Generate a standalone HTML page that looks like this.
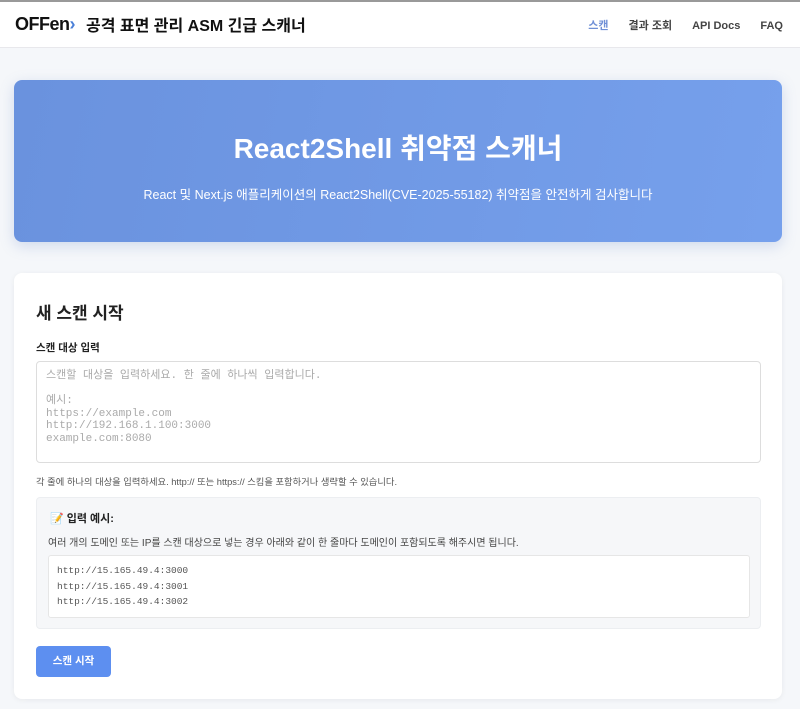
<!DOCTYPE html>
<html><head><meta charset="utf-8"><style>
*{box-sizing:border-box;margin:0;padding:0}
body{width:800px;height:709px;overflow:hidden;background:#f5f7fa;font-family:"Liberation Sans","Noto Sans CJK KR",sans-serif;color:#222}
.top{height:48px;background:#fff;border-top:2px solid #999;border-bottom:1px solid #e8e8ec;position:relative}
.logo{position:absolute;left:15px;top:12px;font-weight:bold;font-size:18px;letter-spacing:-0.5px;color:#111}
.title{position:absolute;left:86px;top:10px;font-size:16px;font-weight:bold;color:#111}
.nav{position:absolute;right:17px;top:15px;font-size:11px;font-weight:bold;color:#444}
.nav span{margin-left:20px}
.hero{position:absolute;left:14px;top:80px;width:768px;height:162px;border-radius:8px;background:linear-gradient(100deg,#6a92de,#76a0ec);box-shadow:0 4px 14px rgba(100,130,200,.25);color:#fff;text-align:center}
.hero h1{font-size:28px;margin-top:47px;font-weight:bold}
.hero p{font-size:12.5px;margin-top:17px}
.card{position:absolute;left:14px;top:273px;width:768px;height:426px;background:#fff;border-radius:8px;box-shadow:0 1px 6px rgba(0,0,0,.06)}
h2{position:absolute;left:22px;top:26px;font-size:17px}
.lab{position:absolute;left:22px;top:67px;font-size:10.5px;font-weight:bold}
.ta{position:absolute;left:22px;top:88px;width:725px;height:102px;border:1px solid #ddd;border-radius:4px;padding:8px 9px;font-family:"Liberation Mono","Noto Sans CJK KR",monospace;font-size:11px;color:#aaa;line-height:12.5px;white-space:pre}
.help{position:absolute;left:22px;top:201px;font-size:9.3px;color:#555}
.ex{position:absolute;left:22px;top:224px;width:725px;height:132px;background:#f6f7f9;border:1px solid #eceef1;border-radius:4px}
.ex b{position:absolute;left:13px;top:12px;font-size:11px}
.ex p{position:absolute;left:11px;top:36px;font-size:10px;color:#444}
.code{position:absolute;left:11px;top:57px;width:702px;height:63px;background:#fff;border:1px solid #e6e6e6;border-radius:3px;padding:7px 8px;font-family:"Liberation Mono",monospace;font-size:9.5px;color:#555;line-height:15.5px}
.btn{position:absolute;left:22px;top:373px;width:75px;height:31px;background:#5d8ff0;border-radius:4px;color:#fff;font-size:10.5px;font-weight:bold;text-align:center;line-height:31px}
</style></head><body>
<div class="top"><div class="logo">OFFen<span style="color:#4a7fd8">›</span></div><div class="title">공격 표면 관리 ASM 긴급 스캐너</div>
<div class="nav"><span style="color:#6f8fd6">스캔</span><span>결과 조회</span><span>API Docs</span><span>FAQ</span></div></div>
<div class="hero"><h1>React2Shell 취약점 스캐너</h1><p>React 및 Next.js 애플리케이션의 React2Shell(CVE-2025-55182) 취약점을 안전하게 검사합니다</p></div>
<div class="card">
<h2>새 스캔 시작</h2>
<div class="lab">스캔 대상 입력</div>
<div class="ta">스캔할 대상을 입력하세요. 한 줄에 하나씩 입력합니다.

예시:
https://example.com
http://192.168.1.100:3000
example.com:8080</div>
<div class="help">각 줄에 하나의 대상을 입력하세요. http:// 또는 https:// 스킴을 포함하거나 생략할 수 있습니다.</div>
<div class="ex"><b><span style="color:#c86">📝</span> 입력 예시:</b><p>여러 개의 도메인 또는 IP를 스캔 대상으로 넣는 경우 아래와 같이 한 줄마다 도메인이 포함되도록 해주시면 됩니다.</p>
<div class="code">http://15.165.49.4:3000<br>http://15.165.49.4:3001<br>http://15.165.49.4:3002</div></div>
<div class="btn">스캔 시작</div>
</div>
</body></html>
